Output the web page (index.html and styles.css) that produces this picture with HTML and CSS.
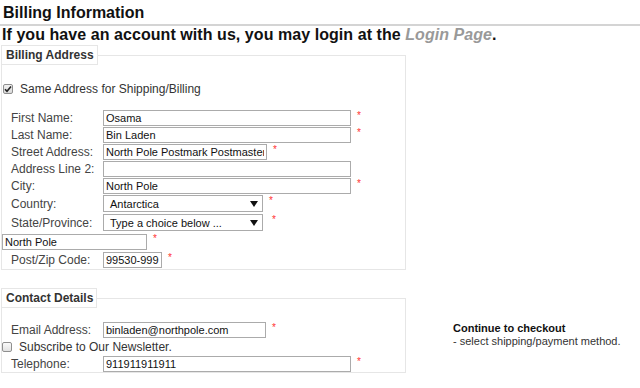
FILE: index.html
```html
<!DOCTYPE html>
<html lang="en">
<head>
    <meta charset="UTF-8">
    <title>Billing Information</title>
    <link rel="stylesheet" href="styles.css">
</head>
<body>
<h1 class="page-title">Billing Information</h1>
<p class="login-note">If you have an account with us, you may login at the <a href="#" class="login-link">Login Page</a>.</p>

<fieldset class="box billing">
    <legend>Billing Address</legend>
    <div class="check-row same-address">
        <span class="check">
            <svg width="8" height="8" viewBox="0 0 8 8"><path d="M1 4.2 L3 6.3 L7 1.5" fill="none" stroke="#222" stroke-width="1.6"/></svg>
        </span>
        <span>Same Address for Shipping/Billing</span>
    </div>
    <div class="rows">
        <div class="row">
            <label>First Name:</label>
            <input class="w-wide" type="text" value="Osama">
            <span class="req">*</span>
        </div>
        <div class="row">
            <label>Last Name:</label>
            <input class="w-wide" type="text" value="Bin Laden">
            <span class="req">*</span>
        </div>
        <div class="row">
            <label>Street Address:</label>
            <input class="w-street" type="text" value="North Pole Postmark Postmaster">
            <span class="req">*</span>
        </div>
        <div class="row">
            <label>Address Line 2:</label>
            <input class="w-wide" type="text" value="">
        </div>
        <div class="row">
            <label>City:</label>
            <input class="w-wide" type="text" value="North Pole">
            <span class="req">*</span>
        </div>
        <div class="row tall">
            <label>Country:</label>
            <div class="select">
                <span>Antarctica</span>
                <svg width="8" height="6" viewBox="0 0 8 6"><polygon points="0,0 8,0 4,6" fill="#111"/></svg>
            </div>
            <span class="req">*</span>
        </div>
        <div class="row tall">
            <label>State/Province:</label>
            <div class="select">
                <span>Type a choice below ...</span>
                <svg width="8" height="6" viewBox="0 0 8 6"><polygon points="0,0 8,0 4,6" fill="#111"/></svg>
            </div>
            <span class="req req-far">*</span>
        </div>
        <div class="row tall">
            <input class="w-state" type="text" value="North Pole">
            <span class="req">*</span>
        </div>
        <div class="row">
            <label>Post/Zip Code:</label>
            <input class="w-zip" type="text" value="99530-999">
            <span class="req">*</span>
        </div>
    </div>
</fieldset>

<div class="contact-wrap">
    <fieldset class="box contact">
        <legend>Contact Details</legend>
        <div class="rows">
            <div class="row">
                <label>Email Address:</label>
                <input class="w-email" type="text" value="binladen@northpole.com">
                <span class="req">*</span>
            </div>
            <div class="check-row">
                <span class="check unchecked"></span>
                <span>Subscribe to Our Newsletter.</span>
            </div>
            <div class="row">
                <label>Telephone:</label>
                <input class="w-wide" type="text" value="911911911911">
                <span class="req">*</span>
            </div>
        </div>
    </fieldset>
    <div class="checkout-note">
        <strong>Continue to checkout</strong>
        <span>- select shipping/payment method.</span>
    </div>
</div>
</body>
</html>
```

FILE: styles.css
```css
body {
    margin: 0;
    font-family: 'Liberation Sans', Arial, sans-serif;
    background-color: white;
    color: #333;
}

.page-title {
    margin: 0;
    padding: 3px 3px 1px;
    font-size: 16px;
    line-height: 20px;
    color: #111;
    border-bottom: 2px solid #d4d4d4;
}

.login-note {
    margin: 0;
    padding-left: 2px;
    font-size: 16px;
    font-weight: bold;
    line-height: 18px;
    letter-spacing: 0.06px;
    color: #111;
}

.login-link {
    color: #999;
    font-style: italic;
    text-decoration: none;
}

.box {
    box-sizing: border-box;
    width: 405px;
    margin: 1px 0 0 1px;
    padding: 0 0 1px;
    border: 1px solid #e6e6e6;
}

.box legend {
    padding: 2px 3px 2px 4px;
    margin-left: -1px;
    border: 1px solid #e6e6e6;
    font-size: 12px;
    font-weight: bold;
    line-height: 14px;
    color: #333;
}

.check-row {
    display: flex;
    align-items: center;
    height: 17px;
    font-size: 12px;
}

.same-address {
    margin: 15px 0 12px 1px;
}

.check {
    box-sizing: border-box;
    display: flex;
    align-items: center;
    justify-content: center;
    width: 10px;
    height: 10px;
    margin-right: 7px;
    border: 1px solid #8f8f8f;
    border-radius: 2px;
    background: linear-gradient(#f2f2f2, #d9d9d9);
}

.check.unchecked {
    background: linear-gradient(#fafafa, #e2e2e2);
}

.row {
    display: flex;
    align-items: center;
    height: 17px;
    font-size: 12px;
}

.row.tall {
    height: 19px;
}

.row label {
    width: 92px;
    padding-left: 9px;
    color: #444;
}

.row input {
    box-sizing: border-box;
    height: 16px;
    padding: 0 2px;
    margin: 0;
    border: 1px solid #ababab;
    border-radius: 0;
    font-family: 'Liberation Sans', Arial, sans-serif;
    font-size: 11px;
    color: #111;
    outline: none;
}

.w-wide { width: 248px; }
.w-street { width: 164px; }
.w-state { width: 145px; }
.w-zip { width: 59px; }
.w-email { width: 163px; }

.select {
    box-sizing: border-box;
    display: flex;
    align-items: center;
    justify-content: space-between;
    width: 160px;
    height: 17px;
    padding: 0 4px 0 6px;
    border: 1px solid #ababab;
    font-size: 11px;
    color: #111;
}

.req {
    align-self: flex-start;
    margin: 2px 0 0 6px;
    font-size: 10px;
    line-height: 10px;
    color: #f33;
}

.req-far {
    margin-left: 9px;
}

.contact-wrap {
    display: flex;
    align-items: flex-start;
    margin-top: 18px;
}

.contact {
    margin-top: 0;
    padding-bottom: 0;
}

.contact .rows {
    margin-top: 13px;
}

.checkout-note {
    display: flex;
    flex-direction: column;
    margin: 34px 0 0 47px;
    font-size: 11px;
    line-height: 13px;
    color: #333;
}

.checkout-note strong {
    color: #111;
}
```
